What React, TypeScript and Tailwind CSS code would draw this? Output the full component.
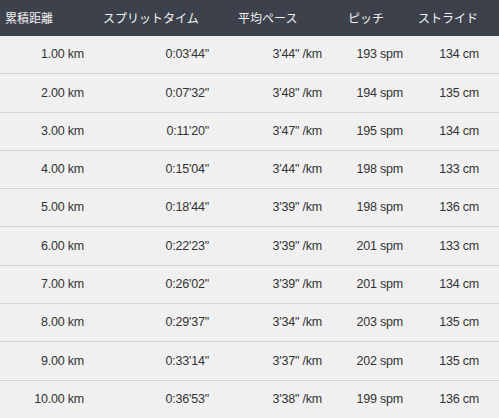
const rows = [
  ["1.00 km", "0:03'44\"", "3'44\" /km", "193 spm", "134 cm"],
  ["2.00 km", "0:07'32\"", "3'48\" /km", "194 spm", "135 cm"],
  ["3.00 km", "0:11'20\"", "3'47\" /km", "195 spm", "134 cm"],
  ["4.00 km", "0:15'04\"", "3'44\" /km", "198 spm", "133 cm"],
  ["5.00 km", "0:18'44\"", "3'39\" /km", "198 spm", "136 cm"],
  ["6.00 km", "0:22'23\"", "3'39\" /km", "201 spm", "133 cm"],
  ["7.00 km", "0:26'02\"", "3'39\" /km", "201 spm", "134 cm"],
  ["8.00 km", "0:29'37\"", "3'34\" /km", "203 spm", "135 cm"],
  ["9.00 km", "0:33'14\"", "3'37\" /km", "202 spm", "135 cm"],
  ["10.00 km", "0:36'53\"", "3'38\" /km", "199 spm", "136 cm"],
];

const grid = "grid grid-cols-[95px_125px_115px_80px_84px]";

export default function App() {
  return (
    <div className="w-[499px] h-[418px] overflow-hidden bg-[#f0f0f0]">
      <div
        className={`${grid} h-[36px] items-center bg-[#3c414c] text-[12px] text-[#f2f2f2]`}
        style={{ fontFamily: '"Noto Sans CJK JP", sans-serif' }}
      >
        <div className="pl-[5px]">累積距離</div>
        <div className="pl-[8px]">スプリットタイム</div>
        <div className="pl-[18px]">平均ペース</div>
        <div className="pl-[13px]">ピッチ</div>
        <div className="pl-[3px]">ストライド</div>
      </div>
      {rows.map((r) => (
        <div
          key={r[0]}
          className={`${grid} h-[38.3px] items-center border-b border-[#d2d2d2] text-[12.5px] text-[#333] tracking-[-0.2px]`}
          style={{ fontFamily: '"Liberation Sans", Arial, sans-serif' }}
        >
          <div className="text-right pr-[11px]">{r[0]}</div>
          <div className="text-right pr-[11px]">{r[1]}</div>
          <div className="text-right pr-[13px]">{r[2]}</div>
          <div className="text-right pr-[12px]">{r[3]}</div>
          <div className="text-right pr-[20px]">{r[4]}</div>
        </div>
      ))}
    </div>
  );
}
